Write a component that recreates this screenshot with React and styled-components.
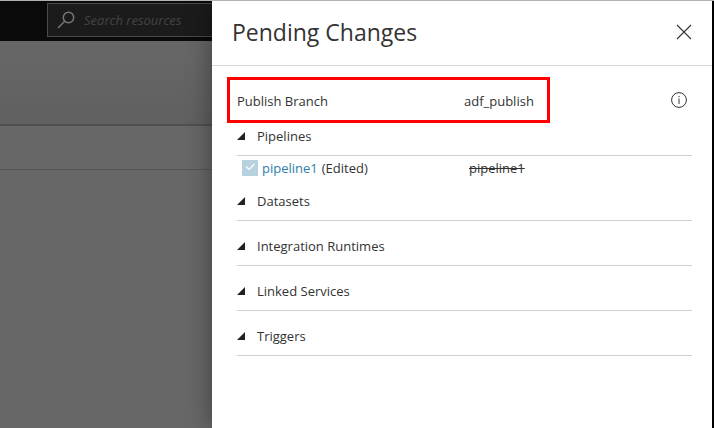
import React, { useState } from "react";
import styled, { createGlobalStyle } from "styled-components";

const GlobalStyle = createGlobalStyle`
  *, *::before, *::after { box-sizing: border-box; }
  body {
    margin: 0;
    color: #333;
    font: 13px/20px "Open Sans", "Noto Sans", sans-serif;
  }
  button, input { font: inherit; color: inherit; }
  button { margin: 0; padding: 0; border: 0; background: none; cursor: pointer; }
`;

const Page = styled.div`
  display: flex;
  min-height: 100vh;
  border-top: 1px solid #b2b2b2;
  box-shadow: inset -2px 0 #000;
  padding-right: 2px;
  overflow: hidden;
`;

const Backdrop = styled.div`
  flex: 1;
  min-width: 0;
  display: flex;
  flex-direction: column;
  overflow: hidden;
  background: #676767;
`;

const TopBar = styled.div`
  display: flex;
  height: 40px;
  padding: 2px 0 4px 47px;
  background: #0a0a0a;
`;

const SearchBox = styled.label`
  flex: 1 0 240px;
  display: flex;
  align-items: center;
  gap: 9px;
  padding-left: 9px;
  border: 1px solid #4a4a4a;
  background: #1b1b1b;
`;

const SearchInput = styled.input`
  flex: 1;
  min-width: 0;
  padding: 0;
  border: 0;
  outline: 0;
  background: none;
  color: #999;
  font-style: italic;
  &::placeholder { color: #444; opacity: 1; }
`;

const ToolbarArea = styled.div`
  height: 85px;
  border-bottom: 2px solid #505050;
  background: linear-gradient(#676767, #606060);
`;

const TabArea = styled.div`
  height: 44px;
  border-bottom: 1px solid #555;
`;

const Panel = styled.aside`
  position: relative;
  width: 500px;
  max-width: 100%;
  background: #fff;
  box-shadow: 0 0 24px rgba(0, 0, 0, 0.4);
`;

const PanelHeader = styled.header`
  display: flex;
  align-items: center;
  justify-content: space-between;
  height: 65px;
  padding: 0 20px 2px;
  border-bottom: 1px solid #d9d9d9;
`;

const Title = styled.h1`
  margin: 0;
  font-size: 23px;
  line-height: 32px;
  font-weight: 400;
`;

const IconButton = styled.button`
  display: flex;
  svg { display: block; }
`;

const BranchRow = styled.div`
  display: flex;
  align-items: center;
  justify-content: space-between;
  padding: 11px 25px 0 15px;
`;

const BranchFrame = styled.dl`
  display: grid;
  grid-template-columns: 227px 1fr;
  align-items: center;
  width: 323px;
  height: 46px;
  margin: 0;
  padding: 2px 0 0 7px;
  border: 3px solid #f00;
  dd { margin: 0; }
`;

const Sections = styled.div`
  display: flex;
  flex-direction: column;
  gap: 12px;
  padding: 0 20px 0 25px;
`;

const SectionHeading = styled.h2`
  margin: 0;
  font: inherit;
`;

const SectionToggle = styled.button`
  display: flex;
  align-items: center;
  gap: 12px;
  width: 100%;
  height: 33px;
  padding-bottom: 6px;
  border-bottom: 1px solid #d0d0d0;
  text-align: left;
`;

const ChangeRow = styled.div`
  display: grid;
  grid-template-columns: 227px 1fr;
  align-items: center;
  height: 20px;
  padding: 4px 0 0 5px;
  line-height: 16px;
`;

const Change = styled.div`
  display: flex;
  align-items: center;
  gap: 4px;
`;

const TickCell = styled.label`
  display: grid;
  > * { grid-area: 1 / 1; }
  svg { z-index: 1; pointer-events: none; visibility: hidden; }
  input:checked + svg { visibility: visible; }
`;

const Tick = styled.input`
  appearance: none;
  width: 16px;
  height: 16px;
  margin: 0;
  background: #b7d1df;
`;

const ChangeLink = styled.a`
  color: #2f7ea8;
  text-decoration: none;
`;

const sections = [
  { name: "Pipelines", changes: [{ name: "pipeline1", state: "(Edited)", published: "pipeline1" }] },
  { name: "Datasets", changes: [] },
  { name: "Integration Runtimes", changes: [] },
  { name: "Linked Services", changes: [] },
  { name: "Triggers", changes: [] },
];

function Section({ name, changes }) {
  const [open, setOpen] = useState(true);
  return (
    <section>
      <SectionHeading>
        <SectionToggle type="button" aria-expanded={open} onClick={() => setOpen(!open)}>
          <svg width="8" height="8" viewBox="0 0 8 8" aria-hidden="true">
            <path d="M8 0V8H0Z" fill="#222" />
          </svg>
          {name}
        </SectionToggle>
      </SectionHeading>
      {open && changes.map((c) => (
        <ChangeRow key={c.name}>
          <Change>
            <TickCell>
              <Tick type="checkbox" defaultChecked aria-label={c.name} />
              <svg width="16" height="16" viewBox="0 0 16 16" fill="none" stroke="#fff" strokeWidth="1.2" aria-hidden="true">
                <path d="M4 6.5L7 9.5L12.5 4" />
              </svg>
            </TickCell>
            <ChangeLink href={`#${c.name}`}>{c.name}</ChangeLink>
            <span>{c.state}</span>
          </Change>
          <s>{c.published}</s>
        </ChangeRow>
      ))}
    </section>
  );
}

export default function App() {
  return (
    <>
      <GlobalStyle />
      <Page>
        <Backdrop>
          <TopBar>
            <SearchBox>
              <svg width="18" height="18" viewBox="0 0 18 18" fill="none" stroke="#777" strokeWidth="1.5" aria-hidden="true">
                <circle cx="11.5" cy="6.5" r="5.2" />
                <path d="M7.7 10.3L1 17" />
              </svg>
              <SearchInput type="search" placeholder="Search resources" aria-label="Search resources" />
            </SearchBox>
          </TopBar>
          <ToolbarArea />
          <TabArea />
        </Backdrop>
        <Panel>
          <PanelHeader>
            <Title>Pending Changes</Title>
            <IconButton type="button" aria-label="Close">
              <svg width="16" height="16" viewBox="0 0 16 16" fill="none" stroke="#333" strokeWidth="1.1">
                <path d="M1 1L15 15M15 1L1 15" />
              </svg>
            </IconButton>
          </PanelHeader>
          <BranchRow>
            <BranchFrame>
              <dt>Publish Branch</dt>
              <dd>adf_publish</dd>
            </BranchFrame>
            <IconButton type="button" aria-label="Information">
              <svg width="16" height="16" viewBox="0 0 16 16" fill="none" stroke="#333">
                <circle cx="8" cy="8" r="7.4" />
                <path d="M8 6.5V12M8 4V5.2" />
              </svg>
            </IconButton>
          </BranchRow>
          <Sections>
            {sections.map((s) => <Section key={s.name} {...s} />)}
          </Sections>
        </Panel>
      </Page>
    </>
  );
}
